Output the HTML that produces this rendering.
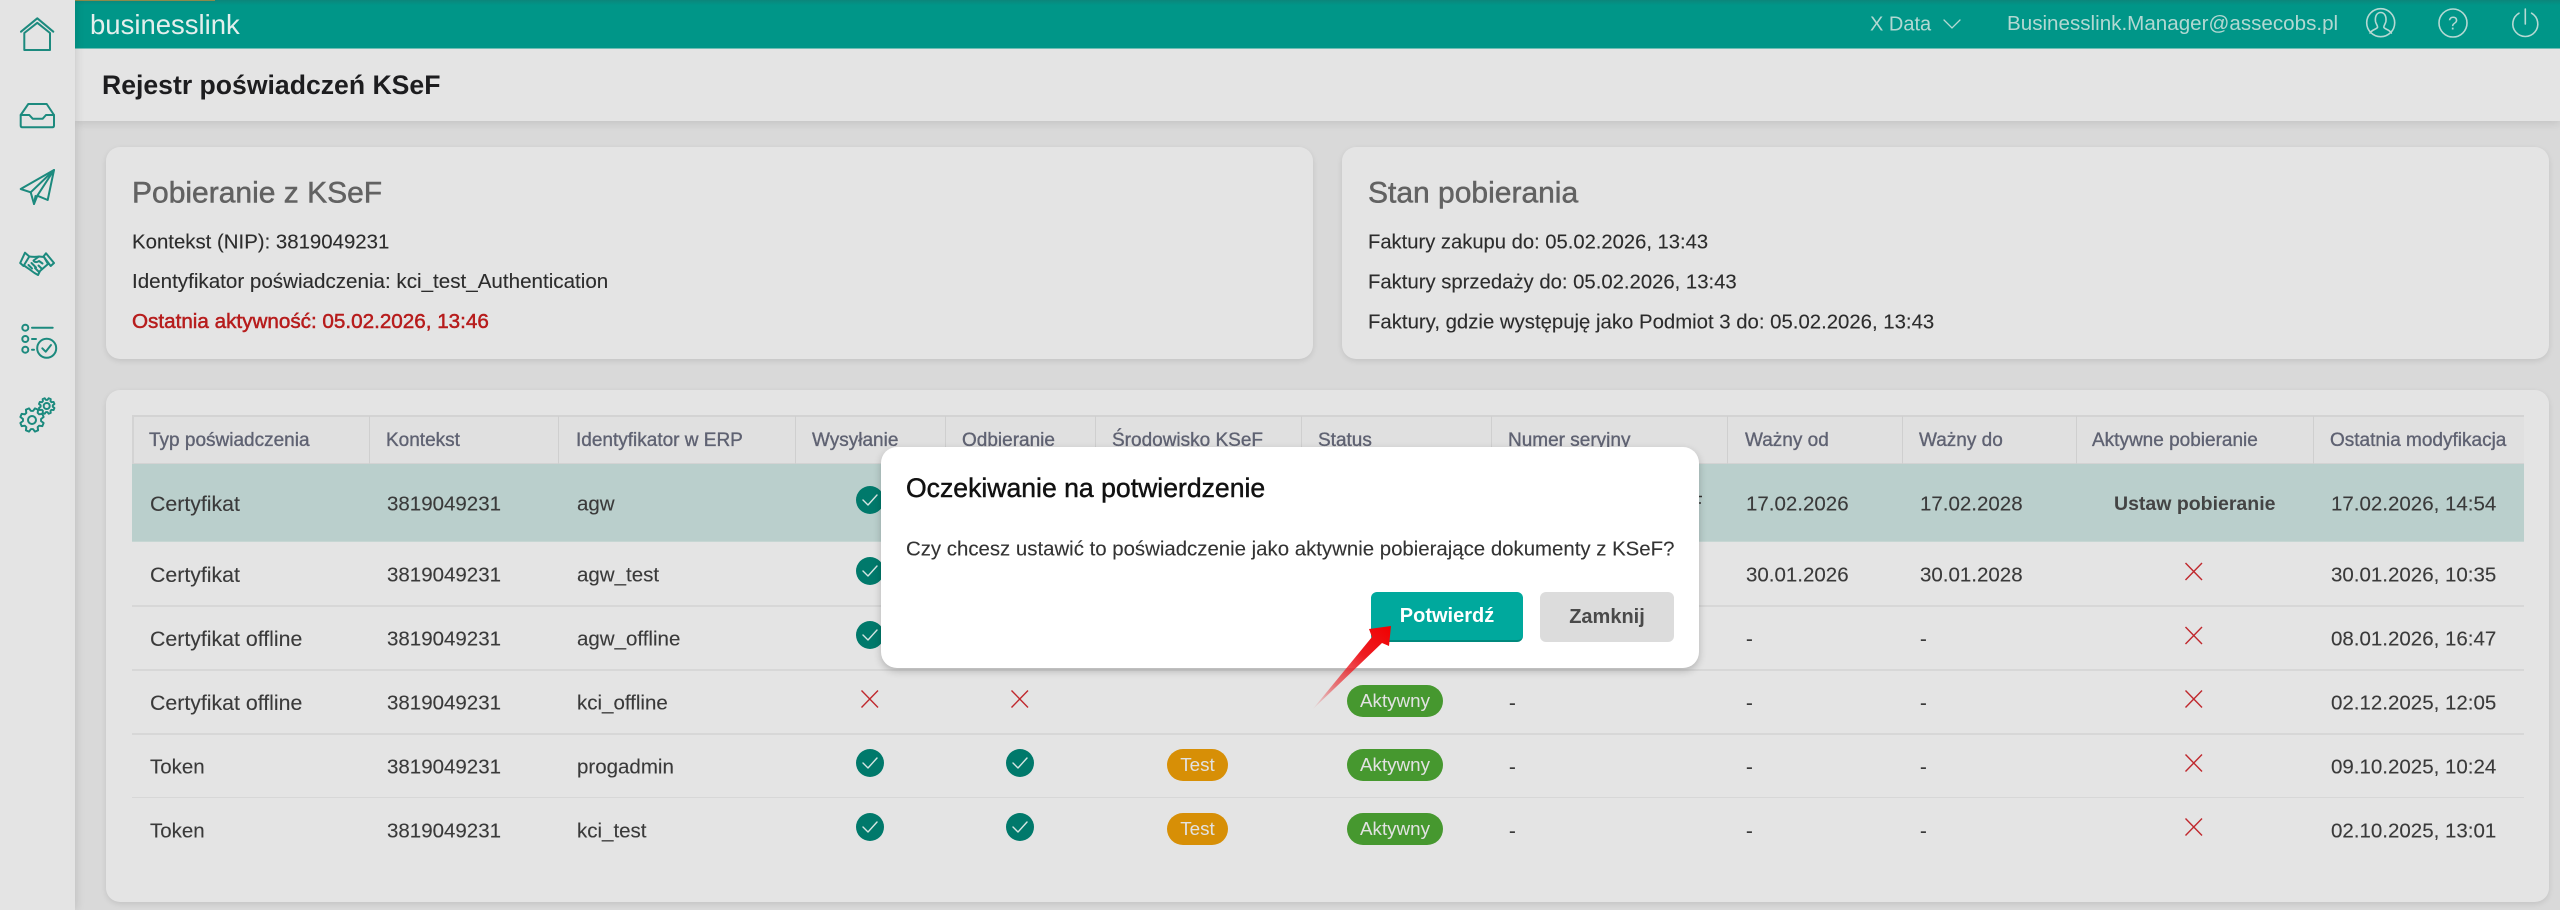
<!DOCTYPE html>
<html lang="pl"><head><meta charset="utf-8"><title>Rejestr poświadczeń KSeF</title>
<style>
*{box-sizing:border-box}
html,body{margin:0;padding:0}
body{width:2560px;height:910px;overflow:hidden;position:relative;background:#d9d9d9;font-family:"Liberation Sans",Arial,sans-serif;color:#3a3a3a}
.a{position:absolute}
.t{position:absolute;white-space:nowrap;line-height:1;transform:translateY(calc(-50% + 1.5px));font-size:20.5px;-webkit-text-stroke:.12px currentColor}
.card{position:absolute;background:#e4e4e4;border-radius:14px;box-shadow:0 2px 6px rgba(0,0,0,.1)}
.t.th{font-size:19px;color:#5f6272;-webkit-text-stroke:.35px #5f6272}
.c{color:#3a3a3a}
.t.m{-webkit-text-stroke:.5px currentColor}
.t.ce{font-size:21.3px}
.pill{position:absolute;height:32px;border-radius:16px;color:#e2e2e2;font-size:18.8px;line-height:32px;text-align:center}
.g{background:#46982f;left:1347px;width:96px}
.o{background:#d78f06;left:1167px;width:61px}
</style></head><body>

<!-- header strip -->
<div class="a" style="left:75px;top:49px;width:2485px;height:72px;background:#e4e4e4;box-shadow:0 3px 8px rgba(0,0,0,.09)"></div>
<div class="t" style="left:102px;top:84px;font-size:26.6px;font-weight:bold;color:#1d1d1f;-webkit-text-stroke:0">Rejestr poświadczeń KSeF</div>

<!-- top bar -->
<div class="a" style="left:75px;top:0;width:2485px;height:49px;background:linear-gradient(#0b867b 0,#009688 5px);border-bottom:1px solid #6fbdb4"></div>
<div class="a" style="left:75px;top:0;width:140px;height:1px;background:#8c8a4a"></div>
<div class="t" style="left:90px;top:22.500px;font-size:27.5px;color:#e3efed;-webkit-text-stroke:0">businesslink</div>
<div class="t" style="left:1870px;top:22.500px;font-size:20px;color:#b2d8d2;-webkit-text-stroke:0">X Data</div>
<div class="t" style="left:2007px;top:22.500px;font-size:20.6px;color:#b2d8d2;-webkit-text-stroke:0">Businesslink.Manager@assecobs.pl</div>

<!-- sidebar -->
<div class="a" style="left:0;top:0;width:75px;height:910px;background:#e4e4e4;box-shadow:2px 0 8px rgba(0,0,0,.1)"></div>

<!-- cards -->
<div class="card" style="left:106px;top:147px;width:1207px;height:212px"></div>
<div class="card" style="left:1342px;top:147px;width:1207px;height:212px"></div>
<div class="card" style="left:106px;top:390px;width:2443px;height:512px"></div>

<div class="t m" style="left:132px;top:192px;font-size:30px;color:#626262">Pobieranie z KSeF</div>
<div class="t" style="left:132px;top:241px;font-size:20.4px;color:#2c2c2c">Kontekst (NIP): 3819049231</div>
<div class="t" style="left:132px;top:281px;font-size:20.6px;color:#2c2c2c">Identyfikator poświadczenia: kci_test_Authentication</div>
<div class="t m" style="left:132px;top:321px;font-size:20.65px;color:#b71c1c">Ostatnia aktywność: 05.02.2026, 13:46</div>

<div class="t m" style="left:1368px;top:192px;font-size:30px;color:#626262">Stan pobierania</div>
<div class="t" style="left:1368px;top:241px;font-size:20.2px;color:#2c2c2c">Faktury zakupu do: 05.02.2026, 13:43</div>
<div class="t" style="left:1368px;top:281px;font-size:20.3px;color:#2c2c2c">Faktury sprzedaży do: 05.02.2026, 13:43</div>
<div class="t" style="left:1368px;top:321px;font-size:20.35px;color:#2c2c2c">Faktury, gdzie występuję jako Podmiot 3 do: 05.02.2026, 13:43</div>

<!-- table background -->
<div class="a" style="left:132px;top:415px;width:2392px;height:49px;background:#e0e0e0;border-top:2px solid #d3d3d3;border-left:2px solid #d3d3d3;border-bottom:1px solid #d3d3d3"></div>
<div class="a" style="left:132px;top:464px;width:2392px;height:78px;background:#bacfcc;border-bottom:1px solid #c6d6d3"></div>
<div class="a" style="left:132px;top:605px;width:2392px;height:2px;background:#d7d7d7"></div>
<div class="a" style="left:132px;top:669px;width:2392px;height:2px;background:#d7d7d7"></div>
<div class="a" style="left:132px;top:733px;width:2392px;height:2px;background:#d7d7d7"></div>
<div class="a" style="left:132px;top:797px;width:2392px;height:1px;background:#d7d7d7"></div>
<div class="a" style="left:369px;top:416px;width:1px;height:48px;background:#cfcfcf"></div>
<div class="a" style="left:558px;top:416px;width:1px;height:48px;background:#cfcfcf"></div>
<div class="a" style="left:795px;top:416px;width:1px;height:48px;background:#cfcfcf"></div>
<div class="a" style="left:945px;top:416px;width:1px;height:48px;background:#cfcfcf"></div>
<div class="a" style="left:1095px;top:416px;width:1px;height:48px;background:#cfcfcf"></div>
<div class="a" style="left:1301px;top:416px;width:1px;height:48px;background:#cfcfcf"></div>
<div class="a" style="left:1491px;top:416px;width:1px;height:48px;background:#cfcfcf"></div>
<div class="a" style="left:1727px;top:416px;width:1px;height:48px;background:#cfcfcf"></div>
<div class="a" style="left:1902px;top:416px;width:1px;height:48px;background:#cfcfcf"></div>
<div class="a" style="left:2076px;top:416px;width:1px;height:48px;background:#cfcfcf"></div>
<div class="a" style="left:2313px;top:416px;width:1px;height:48px;background:#cfcfcf"></div>

<!-- header labels -->
<div class="t th" style="left:149px;top:439px">Typ poświadczenia</div>
<div class="t th" style="left:386px;top:439px">Kontekst</div>
<div class="t th" style="left:576px;top:439px">Identyfikator w ERP</div>
<div class="t th" style="left:812px;top:439px">Wysyłanie</div>
<div class="t th" style="left:962px;top:439px">Odbieranie</div>
<div class="t th" style="left:1112px;top:439px">Środowisko KSeF</div>
<div class="t th" style="left:1318px;top:439px">Status</div>
<div class="t th" style="left:1508px;top:439px">Numer seryjny</div>
<div class="t th" style="left:1745px;top:439px">Ważny od</div>
<div class="t th" style="left:1919px;top:439px">Ważny do</div>
<div class="t th" style="left:2092px;top:439px">Aktywne pobieranie</div>
<div class="t th" style="left:2330px;top:439px">Ostatnia modyfikacja</div>

<!-- rows -->
<div class="t c ce" style="left:150px;top:503px">Certyfikat</div><div class="t c" style="left:387px;top:503px">3819049231</div><div class="t c" style="left:577px;top:503px">agw</div>
<div class="t c" style="left:1746px;top:503px">17.02.2026</div><div class="t c" style="left:1920px;top:503px">17.02.2028</div><div class="t" style="left:2114px;top:503px;font-weight:bold;color:#444;font-size:19.5px;-webkit-text-stroke:0">Ustaw pobieranie</div><div class="t c" style="left:2331px;top:503px">17.02.2026, 14:54</div>

<div class="t c ce" style="left:150px;top:574px">Certyfikat</div><div class="t c" style="left:387px;top:574px">3819049231</div><div class="t c" style="left:577px;top:574px">agw_test</div>
<div class="t c" style="left:1746px;top:574px">30.01.2026</div><div class="t c" style="left:1920px;top:574px">30.01.2028</div><div class="t c" style="left:2331px;top:574px">30.01.2026, 10:35</div>

<div class="t c ce" style="left:150px;top:638px">Certyfikat offline</div><div class="t c" style="left:387px;top:638px">3819049231</div><div class="t c" style="left:577px;top:638px">agw_offline</div>
<div class="t c" style="left:1746px;top:638px">-</div><div class="t c" style="left:1920px;top:638px">-</div><div class="t c" style="left:2331px;top:638px">08.01.2026, 16:47</div>

<div class="t c ce" style="left:150px;top:702px">Certyfikat offline</div><div class="t c" style="left:387px;top:702px">3819049231</div><div class="t c" style="left:577px;top:702px">kci_offline</div>
<div class="t c" style="left:1509px;top:702px">-</div><div class="t c" style="left:1746px;top:702px">-</div><div class="t c" style="left:1920px;top:702px">-</div><div class="t c" style="left:2331px;top:702px">02.12.2025, 12:05</div>

<div class="t c" style="left:150px;top:766px">Token</div><div class="t c" style="left:387px;top:766px">3819049231</div><div class="t c" style="left:577px;top:766px">progadmin</div>
<div class="t c" style="left:1509px;top:766px">-</div><div class="t c" style="left:1746px;top:766px">-</div><div class="t c" style="left:1920px;top:766px">-</div><div class="t c" style="left:2331px;top:766px">09.10.2025, 10:24</div>

<div class="t c" style="left:150px;top:830px">Token</div><div class="t c" style="left:387px;top:830px">3819049231</div><div class="t c" style="left:577px;top:830px">kci_test</div>
<div class="t c" style="left:1509px;top:830px">-</div><div class="t c" style="left:1746px;top:830px">-</div><div class="t c" style="left:1920px;top:830px">-</div><div class="t c" style="left:2331px;top:830px">02.10.2025, 13:01</div>

<!-- pills -->
<div class="pill g" style="top:685px">Aktywny</div>
<div class="pill g" style="top:749px">Aktywny</div>
<div class="pill g" style="top:813px">Aktywny</div>
<div class="pill o" style="top:749px">Test</div>
<div class="pill o" style="top:813px">Test</div>

<!-- icons layer -->
<svg class="a" style="left:0;top:0" width="2560" height="910" viewBox="0 0 2560 910" fill="none">
<!-- sidebar icons -->
<g stroke="#1c8a7e" stroke-width="2" stroke-linejoin="round" stroke-linecap="round">
<path d="M21 31.7 37.3 18.3 53.3 31.7"/>
<path d="M24.3 33 37.3 22.8 50 33V50H24.3Z"/>
<path d="M28.3 104H46.7L54 115V125.5Q54 127.3 52 127.3H22.7Q20.7 127.3 20.7 125.5V115Z"/>
<path d="M20.7 115H29.3L32.7 118.7H42.7L46 115H54"/>
<path d="M54 170 20.7 189 30.7 192.3 34 204 37.3 195.7 47.7 200Z"/>
<path d="M54 170 30.7 192.3M54 170 37.3 195.7M34 204 35.5 196"/>
<path d="M25 252.7 20.2 263 23.5 266 29.3 256.5ZM46 253.3 54 263 50.7 266 43.5 256.5Z"/>
<path d="M29 256.5C33 257 36 257 39 256.5L44 257 48 264 40 271 38 275 34.5 273 29 269 24 265.5"/>
<path d="M39 256.5 33.5 260.5C34.5 262.5 37 262.5 39 261L42.5 263.5"/>
<path d="M28.5 265 32 268.5M31.5 263 36 267.5M35 268 38.5 271.5M38.5 265.5 42 269"/>
<circle cx="25.3" cy="327.7" r="3"/><circle cx="25.3" cy="339" r="3"/><circle cx="25.3" cy="349.7" r="3"/>
<path d="M32 327.7H52.7M32 339H36M32 349.7H34"/>
<circle cx="46.7" cy="348.3" r="9.5"/>
<path d="M42.3 348.3 45.7 351.7 51 345"/>
<polygon transform="translate(32 420) rotate(22.5) scale(1.2)" stroke-width="1.65" points="7.31,-2.09 9.9,-1.39 9.9,1.39 7.31,2.09 6.65,3.68 7.99,6.02 6.02,7.99 3.68,6.65 2.09,7.31 1.39,9.9 -1.39,9.9 -2.09,7.31 -3.68,6.65 -6.02,7.99 -7.99,6.02 -6.65,3.68 -7.31,2.09 -9.9,1.39 -9.9,-1.39 -7.31,-2.09 -6.65,-3.68 -7.99,-6.02 -6.02,-7.99 -3.68,-6.65 -2.09,-7.31 -1.39,-9.9 1.39,-9.9 2.09,-7.31 3.68,-6.65 6.02,-7.99 7.99,-6.02 6.65,-3.68"/>
<circle cx="32" cy="420" r="4"/>
<polygon transform="translate(46.7 406) rotate(22.5) scale(.8)" stroke-width="2.4" points="7.31,-2.09 9.9,-1.39 9.9,1.39 7.31,2.09 6.65,3.68 7.99,6.02 6.02,7.99 3.68,6.65 2.09,7.31 1.39,9.9 -1.39,9.9 -2.09,7.31 -3.68,6.65 -6.02,7.99 -7.99,6.02 -6.02,7.99 -7.99,6.02 -6.65,3.68 -7.31,2.09 -9.9,1.39 -9.9,-1.39 -7.31,-2.09 -6.65,-3.68 -7.99,-6.02 -6.02,-7.99 -3.68,-6.65 -2.09,-7.31 -1.39,-9.9 1.39,-9.9 2.09,-7.31 3.68,-6.65 6.02,-7.99 7.99,-6.02 6.65,-3.68"/>
<circle cx="46.7" cy="406" r="3"/>
</g>
<!-- topbar icons -->
<g stroke="#b5d9d3" stroke-width="1.6" stroke-linecap="round">
<path d="M1944 20 1952 28 1960 20" stroke-width="1.3"/>
<circle cx="2380.7" cy="22.7" r="14"/>
<path d="M2370 33C2372 29.5 2376 29.5 2377.5 27.5 2378 26 2376 24 2375.5 21.5 2374.8 16 2377 12.5 2380.7 12.5 2384.4 12.5 2386.6 16 2385.9 21.5 2385.4 24 2383.4 26 2383.9 27.5 2385.4 29.5 2389.4 29.5 2391.4 33"/>
<circle cx="2453" cy="23" r="14"/>
<path d="M2519 13.2A12.5 12.5 0 1 0 2531.6 13.2M2525.3 9V24"/>
</g>
<text x="2453" y="29.5" text-anchor="middle" font-family="Liberation Sans, sans-serif" font-size="18" fill="#b5d9d3">?</text>
<!-- checks -->
<g fill="#00796b">
<circle cx="870" cy="500" r="14"/><circle cx="870" cy="571" r="14"/><circle cx="870" cy="635" r="14"/>
<circle cx="870" cy="763" r="14"/><circle cx="870" cy="827" r="14"/>
<circle cx="1020" cy="763" r="14"/><circle cx="1020" cy="827" r="14"/>
</g>
<g stroke="#d5e5e2" stroke-width="1.4" stroke-linecap="round" stroke-linejoin="round">
<path d="M863 500 868 505 877 495M863 571 868 576 877 566M863 635 868 640 877 630M863 763 868 768 877 758M863 827 868 832 877 822M1013 763 1018 768 1027 758M1013 827 1018 832 1027 822"/>
</g>
<!-- X marks -->
<g stroke="#c0282d" stroke-width="1.4">
<path d="M861.500 690.500 878 707.500M878 690.500 861.500 707.500"/>
<path d="M1011.500 690.500 1028 707.500M1028 690.500 1011.500 707.500"/>
<path d="M2185.500 563 2202 580M2202 563 2185.500 580"/>
<path d="M2185.500 627 2202 644M2202 627 2185.500 644"/>
<path d="M2185.500 690.500 2202 707.500M2202 690.500 2185.500 707.500"/>
<path d="M2185.500 754.500 2202 771.500M2202 754.500 2185.500 771.500"/>
<path d="M2185.500 818.500 2202 835.500M2202 818.500 2185.500 835.500"/>
</g>
<path d="M1699 496.500h3M1699 503h2" stroke="#333" stroke-width="1.5"/>
</svg>

<!-- dialog -->
<div class="a" style="left:881px;top:447px;width:818px;height:221px;background:#fff;border-radius:16px;box-shadow:0 3px 8px rgba(0,0,0,.22)"></div>
<div class="t m" style="left:906px;top:487px;font-size:26.6px;color:#111;-webkit-text-stroke:.45px #111">Oczekiwanie na potwierdzenie</div>
<div class="t" style="left:906px;top:548px;font-size:20.4px;color:#333">Czy chcesz ustawić to poświadczenie jako aktywnie pobierające dokumenty z KSeF?</div>
<div class="a" style="left:1371px;top:592px;width:152px;height:50px;background:#00a99d;border-radius:6px;border-bottom:2px solid #00897d;color:#fff;font-size:20px;font-weight:bold;line-height:48px;text-align:center">Potwierdź</div>
<div class="a" style="left:1540px;top:592px;width:134px;height:50px;background:#dcdcdc;border-radius:6px;color:#4a4a4a;font-size:20px;font-weight:bold;line-height:50px;text-align:center">Zamknij</div>

<!-- arrow -->
<svg class="a" style="left:0;top:0" width="2560" height="910" viewBox="0 0 2560 910">
<defs><linearGradient id="ar" gradientUnits="userSpaceOnUse" x1="1312" y1="710" x2="1391" y2="626">
<stop offset="0" stop-color="#e8252a" stop-opacity="0"/><stop offset=".3" stop-color="#e8252a" stop-opacity=".6"/><stop offset=".65" stop-color="#ee1c22"/><stop offset="1" stop-color="#f00000"/></linearGradient></defs>
<path d="M1391 626 1369 629 1372 637 1312 710 1382 643 1389 646Z" fill="url(#ar)"/>
</svg>

</body></html>
